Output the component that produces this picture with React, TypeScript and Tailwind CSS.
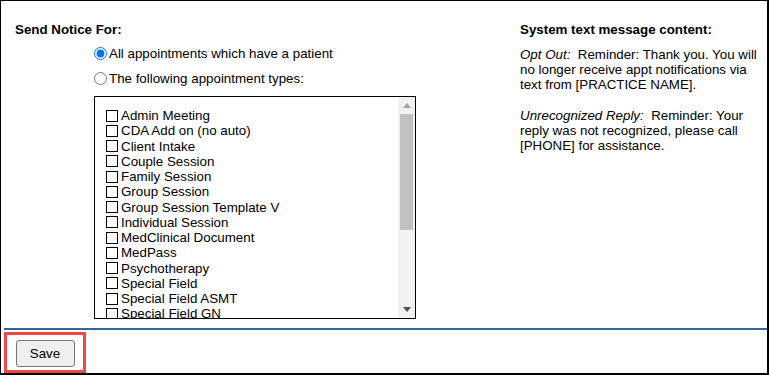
import React from "react";

const items = [
  "Admin Meeting",
  "CDA Add on (no auto)",
  "Client Intake",
  "Couple Session",
  "Family Session",
  "Group Session",
  "Group Session Template V",
  "Individual Session",
  "MedClinical Document",
  "MedPass",
  "Psychotherapy",
  "Special Field",
  "Special Field ASMT",
  "Special Field GN",
  "Telehealth Session",
];

export default function App() {
  return (
    <div className="w-[769px] h-[375px] bg-white text-black border-black border-l border-t border-r-2 border-b-2 flex flex-col font-['Liberation_Sans',Arial,sans-serif] text-[13.33px] leading-[normal] overflow-hidden">
      <div className="h-[327px] shrink-0 flex pt-[21px]">
        <div className="w-[519px] pl-[14px]">
          <div className="font-bold">Send Notice For:</div>
          <div className="ml-[79px]">
            <label className="flex items-center gap-[2px] mt-[9px]">
              <input type="radio" name="notice" defaultChecked className="m-0 w-[13px] h-[13px]" />
              <span>All appointments which have a patient</span>
            </label>
            <label className="flex items-center gap-[2px] mt-[10px]">
              <input type="radio" name="notice" className="m-0 w-[13px] h-[13px]" />
              <span>The following appointment types:</span>
            </label>
            <div className="mt-[10px] w-[322px] h-[223px] border border-black flex">
              <div className="flex-1 overflow-hidden pt-[11px] pl-[11px]">
                {items.map((t) => (
                  <div key={t} className="h-[15.25px] flex items-center gap-[3px] whitespace-nowrap">
                    <span className="w-[12px] h-[12px] border border-black bg-white shrink-0" />
                    <span>{t}</span>
                  </div>
                ))}
              </div>
              <div className="w-[17px] bg-[#f1f1f1] flex flex-col">
                <div className="h-[17px] flex items-center justify-center">
                  <svg width="8" height="5" viewBox="0 0 8 5">
                    <polygon points="0,5 8,5 4,0" fill="#a3a3a3" />
                  </svg>
                </div>
                <div className="h-[116px] mx-[2px] bg-[#c1c1c1]" />
                <div className="flex-1" />
                <div className="h-[17px] flex items-center justify-center">
                  <svg width="8" height="5" viewBox="0 0 8 5">
                    <polygon points="0,0 8,0 4,5" fill="#505050" />
                  </svg>
                </div>
              </div>
            </div>
          </div>
        </div>
        <div className="w-[245px]">
          <div className="font-bold">System text message content:</div>
          <p className="mt-[10px]">
            <i>Opt Out:</i>&nbsp; Reminder: Thank you. You will no longer receive appt notifications via text from [PRACTICE NAME].
          </p>
          <p className="mt-[16px]">
            <i>Unrecognized Reply:</i>&nbsp; Reminder: Your reply was not recognized, please call [PHONE] for assistance.
          </p>
        </div>
      </div>
      <div className="ml-[3px] border-t-[2px] border-[#336699] flex-1">
        <div className="mt-[2px] w-[82px] h-[41px] border-[3px] border-[#f04848] flex justify-center pt-[5px]">
          <button className="h-[27px] w-[59px] bg-[#efefef] border border-[#767676] rounded-[3px] text-black text-[13.33px] leading-none">
            Save
          </button>
        </div>
      </div>
    </div>
  );
}
